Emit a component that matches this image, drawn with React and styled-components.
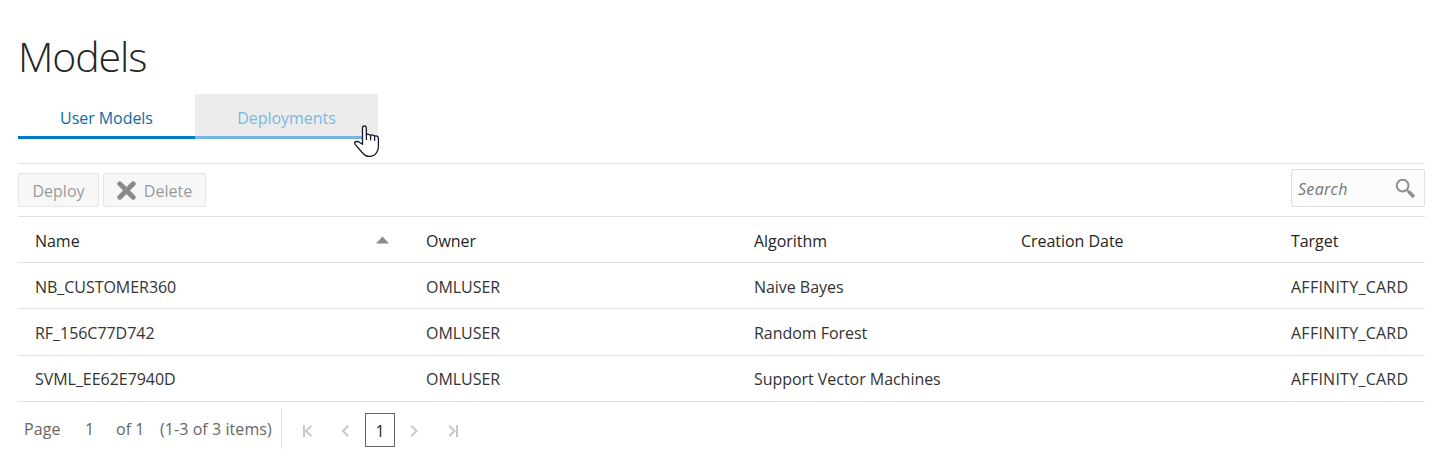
import React from 'react';
import styled, { createGlobalStyle } from 'styled-components';

const GlobalStyle = createGlobalStyle`
  * { box-sizing: border-box; }
  body {
    margin: 0;
    background: #fff;
    color: #333;
    font: 16px/22px "Open Sans", "Noto Sans", sans-serif;
  }
  button, input { font: inherit; }
`;

const line = '#dfe1e2';

const Page = styled.main`
  display: flex;
  flex-direction: column;
  padding: 29px 22px 0 18px;
  height: 476px;
  overflow: hidden;
`;

const Title = styled.h1`
  margin: 0;
  height: 65px;
  font-size: 41px;
  line-height: 55px;
  font-weight: 330;
  letter-spacing: -1.1px;
  color: #252525;
`;

const TabBar = styled.nav`
  display: flex;
  height: 45px;
  margin-bottom: 24px;
`;

const Tab = styled.button`
  position: relative;
  display: flex;
  justify-content: center;
  align-items: center;
  width: ${(p) => p.$width}px;
  padding: 6px 0 0;
  border: 0;
  border-bottom: 3px solid ${(p) => (p.$hovered ? '#74b6e0' : '#007cc8')};
  background: ${(p) => (p.$hovered ? '#ececec' : '#fff')};
  color: ${(p) => (p.$hovered ? '#79b8e0' : '#0f6ba5')};
  letter-spacing: -0.05px;
`;

const Pointer = styled.svg`
  position: absolute;
  left: 159px;
  top: 31px;
`;

const Toolbar = styled.div`
  display: flex;
  align-items: flex-start;
  gap: 4px;
  height: 53px;
  padding-top: 5px;
  border-top: 1px solid ${line};
`;

const ToolButton = styled.button`
  display: flex;
  align-items: center;
  justify-content: center;
  gap: 8px;
  width: ${(p) => p.$width}px;
  height: 34px;
  margin-top: 4px;
  padding: 2px 0 0;
  border: 1px solid #e4e5e6;
  border-radius: 2px;
  background: #f7f7f7;
  color: #999b9d;

  svg { margin-top: -2px; }
`;

const SearchBox = styled.label`
  display: flex;
  align-items: center;
  width: 134px;
  height: 38px;
  margin-left: auto;
  padding: 0 8px 0 6px;
  border: 1px solid #dfe1e2;
  border-radius: 2px;
  background: #fcfcfc;
`;

const SearchInput = styled.input`
  flex: 1;
  min-width: 0;
  padding: 2px 0 0;
  border: 0;
  outline: 0;
  background: transparent;

  &::placeholder {
    color: #767676;
    font-style: italic;
    letter-spacing: 0.3px;
    opacity: 1;
  }
`;

const Grid = styled.div`
  display: flex;
  flex-direction: column;
  border-top: 1px solid ${line};
`;

const Row = styled.div`
  display: grid;
  grid-template-columns: 391px 328px 267px 270px 1fr;
  align-items: start;
  height: ${(p) => p.$height || 46}px;
  padding: 13px 0 0 17px;
  border-bottom: 1px solid ${line};
  color: ${(p) => (p.$header ? '#252525' : '#333')};

  &:last-child { padding-top: 12px; }
`;

const Cell = styled.div`
  display: flex;
  align-items: center;
  justify-content: space-between;
  padding-right: 37px;
  white-space: nowrap;
  letter-spacing: -0.04px;
`;

const LastCell = styled(Cell)`
  padding-right: 0;
  letter-spacing: 0.25px;
`;

const SortArrow = styled.svg`
  margin-top: -2px;
`;

const Footer = styled.footer`
  display: flex;
  height: 47px;
  padding: 6px 0 0 6px;
  color: #666;
`;

const PageInfo = styled.div`
  display: flex;
  width: 258px;
  height: 41px;
  padding-top: 10px;
  border-right: 1px solid ${line};
  white-space: nowrap;
`;

const InfoText = styled.span`
  width: ${(p) => p.$width}px;
  letter-spacing: 0.07px;
`;

const Pager = styled.div`
  display: flex;
  align-items: center;
  margin-top: 5px;
  height: 34px;
  padding-left: 20px;
`;

const PagerStep = styled.svg`
  margin-top: 2px;
  margin-right: ${(p) => p.$after || 0}px;
  fill: none;
  stroke: #c6c8ca;
  stroke-width: 2;
`;

const CurrentPage = styled.span`
  display: flex;
  align-items: center;
  justify-content: center;
  width: 30px;
  height: 34px;
  margin-right: 14px;
  padding-top: 2px;
  border: 1px solid #666;
  color: #252525;
`;

const models = [
  { name: 'NB_CUSTOMER360', owner: 'OMLUSER', algorithm: 'Naive Bayes', target: 'AFFINITY_CARD', height: 46 },
  { name: 'RF_156C77D742', owner: 'OMLUSER', algorithm: 'Random Forest', target: 'AFFINITY_CARD', height: 47 },
  { name: 'SVML_EE62E7940D', owner: 'OMLUSER', algorithm: 'Support Vector Machines', target: 'AFFINITY_CARD', height: 46 },
];

function HandPointer() {
  return (
    <Pointer width="26" height="33" viewBox="0 0 26 33" aria-hidden="true">
      <path
        d="M8.5 19.3V3.2C8.5 1.7 9.3.8 10.4.8s1.9.9 1.9 2.4v6.6c.4-.7 3.5-.9 4.2.7.9-.9 3.4-.6 4 .7 1.3-.7 3.9-.2 3.9 2.1v8.2c0 3-.8 4.6-2 6.3-1.5 2.6-3.7 3.6-6.9 3.6-3 0-5-1-6.9-3.4L1.2 19.3c-1.1-1.6-.3-2.7 1.3-2.8 1.8-.1 3.1.5 4.2 1.6z"
        fill="#fff"
        stroke="#16162b"
        strokeWidth="1.3"
        strokeLinejoin="round"
      />
      <path d="M12.4 9.5v5.5M16.6 10.5v4.7M20.6 11.2v4.5" fill="none" stroke="#16162b" strokeWidth="1.3" />
    </Pointer>
  );
}

export default function App() {
  return (
    <Page>
      <GlobalStyle />
      <Title>Models</Title>
      <TabBar>
        <Tab $width={177}>User Models</Tab>
        <Tab $width={183} $hovered>
          Deployments
          <HandPointer />
        </Tab>
      </TabBar>

      <Toolbar>
        <ToolButton $width={81}>Deploy</ToolButton>
        <ToolButton $width={103}>
          <svg width="19" height="19" viewBox="0 0 19 19" aria-hidden="true">
            <path d="M2.8 2.8l13.4 13.4M16.2 2.8L2.8 16.2" stroke="#868c8f" strokeWidth="5" strokeLinecap="round" />
          </svg>
          Delete
        </ToolButton>
        <SearchBox>
          <SearchInput placeholder="Search" aria-label="Search" />
          <svg width="21" height="21" viewBox="0 0 21 21" fill="none" stroke="#8b9093" aria-hidden="true">
            <circle cx="7.6" cy="7.6" r="5.9" strokeWidth="2" />
            <path d="M11.8 11.8l2.2 2.2" strokeWidth="2" />
            <path d="M13.6 13.6l5.3 5.3" strokeWidth="3.6" />
          </svg>
        </SearchBox>
      </Toolbar>

      <Grid>
        <Row $header>
          <Cell>
            Name
            <SortArrow width="13" height="8" viewBox="0 0 13 8" aria-hidden="true">
              <path d="M0 7.5L6.5 0.5L13 7.5z" fill="#868c8f" />
            </SortArrow>
          </Cell>
          <Cell>Owner</Cell>
          <Cell>Algorithm</Cell>
          <Cell>Creation Date</Cell>
          <Cell>Target</Cell>
        </Row>
        {models.map((m) => (
          <Row key={m.name} $height={m.height}>
            <Cell>{m.name}</Cell>
            <Cell>{m.owner}</Cell>
            <Cell>{m.algorithm}</Cell>
            <Cell />
            <LastCell>{m.target}</LastCell>
          </Row>
        ))}
      </Grid>

      <Footer>
        <PageInfo>
          <InfoText $width={61}>Page</InfoText>
          <InfoText $width={31}>1</InfoText>
          <InfoText $width={44}>of 1</InfoText>
          <InfoText $width={112}>(1-3 of 3 items)</InfoText>
        </PageInfo>
        <Pager>
          <PagerStep $after={28} width="11" height="12" viewBox="0 0 11 12">
            <path d="M2 0v12M9.3.8L4 6l5.3 5.2" />
          </PagerStep>
          <PagerStep $after={15} width="9" height="12" viewBox="0 0 9 12">
            <path d="M7.3.8L2 6l5.3 5.2" />
          </PagerStep>
          <CurrentPage>1</CurrentPage>
          <PagerStep $after={29} width="10" height="12" viewBox="0 0 10 12">
            <path d="M2.2.8L7.5 6l-5.3 5.2" />
          </PagerStep>
          <PagerStep width="11" height="12" viewBox="0 0 11 12">
            <path d="M9 0v12M1.2.8L6.5 6l-5.3 5.2" />
          </PagerStep>
        </Pager>
      </Footer>
    </Page>
  );
}
